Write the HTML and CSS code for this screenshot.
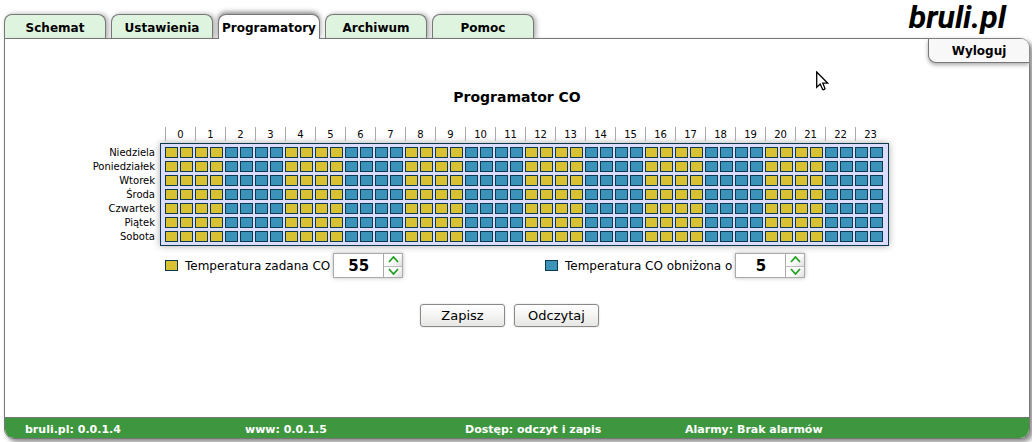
FILE: index.html
```html
<!DOCTYPE html>
<html lang="pl">
<head>
<meta charset="utf-8">
<title>Programator CO</title>
<link rel="stylesheet" href="styles.css">
</head>
<body>
<header class="top">
  <nav class="tabs">
    <a class="tab" href="#schemat">Schemat</a>
    <a class="tab" href="#ustawienia">Ustawienia</a>
    <a class="tab tab-active" href="#programatory" aria-current="page">Programatory</a>
    <a class="tab" href="#archiwum">Archiwum</a>
    <a class="tab" href="#pomoc">Pomoc</a>
  </nav>
  <a class="logo" href="#start">bruli.pl</a>
</header>
<main class="panel">
  <a class="logout" href="#wyloguj">Wyloguj</a>
  <h1 class="title">Programator CO</h1>
  <div class="programmer">
    <div class="hours" id="hours"></div>
    <div class="days">
      <span>Niedziela</span><span>Poniedziałek</span><span>Wtorek</span><span>Środa</span><span>Czwartek</span><span>Piątek</span><span>Sobota</span>
    </div>
    <div class="schedule" id="schedule"></div>
    <div class="legend">
      <div class="legend-item">
        <span class="swatch high"></span>
        <label for="set-temp">Temperatura zadana CO</label>
        <div class="spinner">
          <input id="set-temp" type="text" inputmode="numeric" value="55">
          <div class="steps">
            <button type="button" aria-label="Zwiększ"><svg viewBox="0 0 11 7"><path d="M1 6L5.500 1L10 6"/></svg></button>
            <button type="button" aria-label="Zmniejsz"><svg viewBox="0 0 11 7"><path d="M1 1L5.500 6L10 1"/></svg></button>
          </div>
        </div>
      </div>
      <div class="legend-item">
        <span class="swatch low"></span>
        <label for="drop-temp">Temperatura CO obniżona o</label>
        <div class="spinner">
          <input id="drop-temp" type="text" inputmode="numeric" value="5">
          <div class="steps">
            <button type="button" aria-label="Zwiększ"><svg viewBox="0 0 11 7"><path d="M1 6L5.500 1L10 6"/></svg></button>
            <button type="button" aria-label="Zmniejsz"><svg viewBox="0 0 11 7"><path d="M1 1L5.500 6L10 1"/></svg></button>
          </div>
        </div>
      </div>
    </div>
  </div>
  <div class="actions">
    <button class="action" type="button">Zapisz</button>
    <button class="action" type="button">Odczytaj</button>
  </div>
  <footer class="status">
    <span>bruli.pl: 0.0.1.4</span>
    <span>www: 0.0.1.5</span>
    <span>Dostęp: odczyt i zapis</span>
    <span>Alarmy: Brak alarmów</span>
  </footer>
</main>
<svg class="pointer" viewBox="0 0 13 20" aria-hidden="true"><path d="M.7 1V16.200L4.200 13L6.700 18.500Q8 19.200 9 17.600L6.800 12.200H11.800Z"/></svg>
<script src="schedule.js"></script>
</body>
</html>
```

FILE: styles.css
```css
* {
  box-sizing: border-box;
}

body {
  margin: 0;
  min-height: 100vh;
  padding: 0 2px 3px 4px;
  display: flex;
  flex-direction: column;
  background: #fff;
  color: #000;
  font-family: "DejaVu Sans", Verdana, sans-serif;
  font-size: 12px;
  overflow: hidden;
}

a {
  color: inherit;
  text-decoration: none;
}

button,
input {
  font-family: inherit;
  color: inherit;
}

.top {
  display: flex;
  justify-content: space-between;
  align-items: flex-end;
  height: 39px;
  margin-bottom: -1px;
}

.tabs {
  display: flex;
  gap: 5px;
}

.tab {
  width: 102px;
  height: 25px;
  border: 1px solid #777;
  border-bottom: 0;
  border-radius: 8px 8px 0 0;
  background: #dff4df;
  box-shadow: 2px 0 5px #aaa;
  font-weight: bold;
  line-height: 26px;
  text-align: center;
}

.tab-active {
  position: relative;
  z-index: 2;
  background: #fff;
  box-shadow: 0 -2px 5px #888;
  clip-path: inset(-8px -8px 0 -8px);
}

.logo {
  align-self: flex-start;
  margin-right: 24px;
  font-family: Roboto, sans-serif;
  font-size: 32px;
  font-style: italic;
  font-weight: 700;
  line-height: 34px;
}

.panel {
  position: relative;
  z-index: 1;
  flex: 1;
  display: flex;
  flex-direction: column;
  border: 1px solid #777;
  border-radius: 0 10px 10px 10px;
  background: #fff;
  box-shadow: 3px 3px 5px #888;
}

.logout {
  align-self: flex-end;
  width: 101px;
  height: 24px;
  border: 1px solid #777;
  border-width: 0 0 1px 1px;
  border-radius: 0 8px 0 8px;
  background: #f8f8f8;
  box-shadow: 0 2px 4px #aaa;
  font-weight: bold;
  line-height: 24px;
  text-align: center;
}

.title {
  margin: 24px 0 20px;
  font-size: 14px;
  line-height: 20px;
  text-align: center;
}

.programmer {
  display: grid;
  grid-template-columns: 70px 729px;
  column-gap: 5px;
  margin: 0 auto;
  padding-right: 60px;
}

.hours {
  grid-column: 2;
  display: grid;
  grid-template-columns: repeat(24, 30px);
  height: 16px;
  padding-left: 5px;
  font-size: 10px;
  line-height: 15px;
  text-align: center;
}

.hours span {
  height: 14px;
  border-left: 1px solid #aaa;
}

.days {
  display: grid;
  grid-auto-rows: 14px;
  padding-top: 3px;
  font-size: 10px;
  line-height: 14px;
  text-align: right;
}

.schedule {
  display: grid;
  grid-template-columns: repeat(48, 13px);
  grid-auto-rows: 11px;
  gap: 3px 2px;
  padding: 3px 4px;
  border: 1px solid #0b3950;
  background: #dcdcff;
  box-shadow: 0 0 7px #aaa;
}

.slot {
  padding: 0;
  border: 1px solid #0b3950;
}

.high {
  background: #d8c234;
}

.low {
  background: #3c93ba;
}

.legend {
  grid-column: 2;
  display: grid;
  grid-template-columns: 380px 1fr;
  padding: 7px 0 0 5px;
}

.legend-item {
  display: flex;
  align-items: center;
}

.swatch {
  width: 13px;
  height: 11px;
  margin-right: 7px;
  border: 1px solid #0b3950;
}

.spinner {
  display: flex;
  width: 70px;
  height: 25px;
  margin-left: 3px;
  border: 1px solid #aaa;
  background: #fff;
  box-shadow: 0 0 4px #bbb;
}

.spinner input {
  width: 49px;
  padding: 0;
  border: 0;
  background: #fff;
  font-size: 15px;
  font-weight: bold;
  text-align: center;
}

.steps {
  flex: 1;
  display: grid;
  grid-template-rows: 1fr 1fr;
  border-left: 1px solid #aaa;
}

.steps button {
  display: grid;
  place-items: center;
  padding: 0;
  border: 0;
  background: linear-gradient(135deg, #fff 50%, #ddd);
}

.steps button + button {
  border-top: 1px solid #bbb;
}

.steps svg {
  width: 11px;
  height: 7px;
  fill: none;
  stroke: #22a022;
  stroke-width: 1.800;
}

.actions {
  display: flex;
  justify-content: center;
  gap: 9px;
  padding: 26px 15px 20px 0;
}

.action {
  width: 85px;
  height: 23px;
  padding: 0;
  border: 1px solid #8d8888;
  border-radius: 3px;
  background: linear-gradient(#fff, #f4f4f3 50%, #e6e6e4);
  box-shadow: 0 0 2px #ccc;
  font-size: 13px;
}

.status {
  display: grid;
  grid-template-columns: repeat(3, 220px) 1fr;
  height: 21px;
  margin-top: auto;
  padding-left: 20px;
  border-top: 1px solid #777;
  border-radius: 0 0 9px 9px;
  background: #3e963e;
  color: #fff;
  font-size: 11px;
  font-weight: bold;
  line-height: 23px;
}

.pointer {
  position: absolute;
  z-index: 3;
  left: 816px;
  top: 71px;
  width: 13px;
  height: 20px;
  fill: #fff;
  stroke: #000;
  stroke-width: 1.300;
}
```

FILE: schedule.js
```js
const hours = document.getElementById("hours");
const schedule = document.getElementById("schedule");

for (let h = 0; h < 24; h++) {
  const label = document.createElement("span");
  label.textContent = h;
  hours.append(label);
}

for (let day = 0; day < 7; day++) {
  for (let half = 0; half < 48; half++) {
    const slot = document.createElement("button");
    slot.type = "button";
    slot.className = "slot " + (half % 8 < 4 ? "high" : "low");
    slot.setAttribute("aria-label", Math.floor(half / 2) + (half % 2 ? ":30" : ":00"));
    schedule.append(slot);
  }
}
```
